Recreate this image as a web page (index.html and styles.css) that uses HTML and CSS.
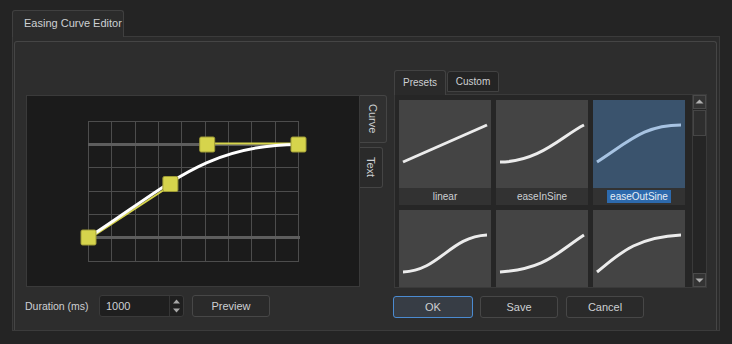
FILE: index.html
```html
<!DOCTYPE html>
<html>
<head>
<meta charset="utf-8">
<link rel="stylesheet" href="styles.css">
</head>
<body>
<div class="app">
  <div class="tabbar"><div class="tab">Easing Curve Editor</div></div>
  <div class="pane">
    <div class="frame">
      <div class="left">
        <div class="editor-row">
          <div class="canvas">
            <svg class="curve-svg" width="332" height="190" viewBox="0 0 332 190">
              <g stroke="#4d4d4d" stroke-width="1">
                <line x1="61.5" y1="25" x2="61.5" y2="166"/>
                <line x1="84.5" y1="25" x2="84.5" y2="166"/>
                <line x1="108.5" y1="25" x2="108.5" y2="166"/>
                <line x1="131.5" y1="25" x2="131.5" y2="166"/>
                <line x1="154.5" y1="25" x2="154.5" y2="166"/>
                <line x1="178.5" y1="25" x2="178.5" y2="166"/>
                <line x1="201.5" y1="25" x2="201.5" y2="166"/>
                <line x1="224.5" y1="25" x2="224.5" y2="166"/>
                <line x1="248.5" y1="25" x2="248.5" y2="166"/>
                <line x1="271.5" y1="25" x2="271.5" y2="166"/>
                <line x1="61" y1="25.5" x2="272" y2="25.5"/>
                <line x1="61" y1="71.5" x2="272" y2="71.5"/>
                <line x1="61" y1="95.5" x2="272" y2="95.5"/>
                <line x1="61" y1="118.5" x2="272" y2="118.5"/>
                <line x1="61" y1="165.5" x2="272" y2="165.5"/>
              </g>
              <g stroke="#5e5e5e" stroke-width="3">
                <line x1="61" y1="48.5" x2="273" y2="48.5"/>
                <line x1="61" y1="141.5" x2="273" y2="141.5"/>
              </g>
              <g stroke="#d6d44c" stroke-width="2">
                <line x1="62.5" y1="142.5" x2="144.4" y2="89"/>
                <line x1="180.2" y1="47.5" x2="271.5" y2="47.5"/>
              </g>
              <path d="M61.5 141.5 C143.4 88 180.2 48.5 271.5 48.5" fill="none" stroke="#ffffff" stroke-width="3"/>
              <g fill="#d6d44c" stroke="#9e9b36" stroke-width="1">
                <rect x="54" y="134" width="15" height="15" rx="1.5"/>
                <rect x="135.9" y="80.5" width="15" height="15" rx="1.5"/>
                <rect x="172.7" y="41" width="15" height="15" rx="1.5"/>
                <rect x="264" y="41" width="15" height="15" rx="1.5"/>
              </g>
            </svg>
          </div>
          <div class="vtabs">
            <div class="vtab vtab-active">Curve</div>
            <div class="vtab vtab-text">Text</div>
          </div>
        </div>
        <div class="bottom-row">
          <span class="dur-label">Duration (ms)</span>
          <div class="spin">
            <span class="spin-value">1000</span>
            <div class="spin-btns">
              <svg width="13" height="20" viewBox="0 0 13 20">
                <polygon points="3,7.5 10,7.5 6.5,3.5" fill="#a8a8a8"/>
                <polygon points="3,12.5 10,12.5 6.5,16.5" fill="#a8a8a8"/>
              </svg>
            </div>
          </div>
          <div class="btn btn-preview">Preview</div>
        </div>
      </div>
      <div class="right">
        <div class="ptabs">
          <div class="ptab ptab-active">Presets</div>
          <div class="ptab">Custom</div>
        </div>
        <div class="list">
          <div class="items">
            <div class="item">
              <svg class="thumb" width="92" height="88" viewBox="0 0 92 88"><path d="M4 62 L88 25" /></svg>
              <div class="item-label"><span>linear</span></div>
            </div>
            <div class="item">
              <svg class="thumb" width="92" height="88" viewBox="0 0 92 88"><path d="M4 62 C43.5 62 66.6 35.5 88 25" /></svg>
              <div class="item-label"><span>easeInSine</span></div>
            </div>
            <div class="item item-selected">
              <svg class="thumb" width="92" height="88" viewBox="0 0 92 88"><path d="M4 62 C36.8 40.7 51.5 25 88 25" /></svg>
              <div class="item-label"><span>easeOutSine</span></div>
            </div>
            <div class="item">
              <svg class="thumb" width="92" height="88" viewBox="0 0 92 88"><path d="M4 62 C41.4 60.2 50.2 26.9 88 25" /></svg>
            </div>
            <div class="item">
              <svg class="thumb" width="92" height="88" viewBox="0 0 92 88"><path d="M4 62 C50.2 58.9 61.1 42.4 88 25" /></svg>
            </div>
            <div class="item">
              <svg class="thumb" width="92" height="88" viewBox="0 0 92 88"><path d="M4 62 C25 45 41.8 27.2 88 25" /></svg>
            </div>
          </div>
          <div class="scrollbar">
            <div class="sb-btn">
              <svg width="11" height="12" viewBox="0 0 11 12"><polygon points="1.5,7.5 9.5,7.5 5.5,3.5" fill="#b0b0b0"/></svg>
            </div>
            <div class="sb-handle"></div>
            <div class="sb-track"></div>
            <div class="sb-btn">
              <svg width="11" height="12" viewBox="0 0 11 12"><polygon points="1.5,4.5 9.5,4.5 5.5,8.5" fill="#b0b0b0"/></svg>
            </div>
          </div>
        </div>
        <div class="bottom-row bottom-right">
          <div class="btn btn-ok">OK</div>
          <div class="btn btn-save">Save</div>
          <div class="btn btn-cancel">Cancel</div>
        </div>
      </div>
    </div>
  </div>
</div>
</body>
</html>
```

FILE: styles.css
```css
* { box-sizing: border-box; }
html, body {
  margin: 0;
  padding: 0;
  background: #242424;
}
body {
  font-family: "Liberation Sans", Arial, sans-serif;
  font-size: 10.5px;
  color: #cdd0d3;
  width: 732px;
  height: 344px;
  overflow: hidden;
}
.app {
  padding: 10px 12px 0 12px;
}
.tabbar {
  display: flex;
  height: 26px;
}
.tab {
  position: relative;
  z-index: 1;
  width: 112px;
  height: 27px;
  padding-left: 11px;
  line-height: 25px;
  font-size: 11px;
  background: #2b2b2b;
  border: 1px solid #404040;
  border-bottom: none;
  border-radius: 3px 3px 0 0;
}
.pane {
  width: 708px;
  height: 295px;
  border: 1px solid #3b3b3b;
  background: #2b2b2b;
  padding: 4px 2px 0 1px;
}
.frame {
  height: 100%;
  border: 1px solid #454545;
  border-bottom: none;
  border-radius: 3px 3px 0 0;
  background: #2d2d2d;
  padding: 28px 9px 0 11px;
  display: flex;
  gap: 7px;
}
.left {
  width: 361px;
  margin-top: 25px;
  display: flex;
  flex-direction: column;
}
.editor-row {
  display: flex;
  height: 192px;
}
.canvas {
  width: 334px;
  height: 192px;
  border: 1px solid #3a3a3a;
  background: #1b1b1b;
}
.curve-svg { display: block; }
.vtabs {
  width: 27px;
  display: flex;
  flex-direction: column;
  align-items: flex-start;
}
.vtab {
  writing-mode: vertical-rl;
  display: flex;
  align-items: center;
  justify-content: center;
  border: 1px solid #454545;
  border-left: none;
  border-radius: 0 3px 3px 0;
  font-size: 11px;
}
.vtab-active {
  width: 27px;
  height: 48px;
  background: #303030;
}
.vtab-text {
  width: 23px;
  height: 41px;
  margin-top: 4px;
  background: #2a2a2a;
}
.bottom-row {
  display: flex;
  align-items: center;
  height: 22px;
  margin-top: 8px;
}
.dur-label {
  width: 74px;
  margin-left: -1px;
}
.spin {
  width: 85px;
  height: 22px;
  border: 1px solid #3a3a3a;
  border-radius: 3px;
  background: #1f1f1f;
  display: flex;
  align-items: center;
  justify-content: space-between;
}
.spin-value {
  padding-left: 6px;
  font-size: 11px;
}
.spin-btns {
  width: 14px;
  height: 20px;
  border-left: 1px solid #353535;
}
.spin-btns svg { display: block; }
.btn {
  height: 22px;
  border: 1px solid #474747;
  border-radius: 3px;
  background: #2a2a2a;
  display: flex;
  align-items: center;
  justify-content: center;
  font-size: 11px;
}
.btn-preview {
  width: 78px;
  margin-left: 8px;
}
.right {
  width: 313px;
  display: flex;
  flex-direction: column;
}
.ptabs {
  display: flex;
  align-items: flex-end;
  height: 24px;
  gap: 1px;
}
.ptab {
  width: 52px;
  height: 21px;
  margin-bottom: 2px;
  border: 1px solid #424242;
  border-radius: 3px 3px 0 0;
  background: #242424;
  display: flex;
  align-items: center;
  justify-content: center;
  font-size: 10px;
}
.ptab-active {
  height: 25px;
  margin-bottom: -1px;
  background: #2a2a2a;
  position: relative;
  z-index: 1;
  border-bottom: none;
  padding-bottom: 2px;
}
.list {
  height: 194px;
  border: 1px solid #3a3a3a;
  background: #262626;
  display: flex;
  overflow: hidden;
}
.items {
  width: 297px;
  padding: 5px 0 0 4px;
  display: grid;
  grid-template-columns: 92px 92px 92px;
  grid-auto-rows: 105px;
  column-gap: 5px;
  row-gap: 5px;
  overflow: hidden;
}
.item {
  display: flex;
  flex-direction: column;
  background: #323232;
}
.thumb {
  display: block;
  background: #444444;
}
.thumb path {
  fill: none;
  stroke: #ececec;
  stroke-width: 3;
}
.item-label {
  height: 17px;
  display: flex;
  align-items: center;
  justify-content: center;
  font-size: 10px;
}
.item-label span {
  padding: 1px 3px;
}
.item-selected .thumb {
  background: #3a536d;
}
.item-selected .thumb path {
  stroke: #a7c3e2;
}
.item-selected .item-label span {
  background: #2d6aad;
  color: #e6eef6;
}
.scrollbar {
  width: 14px;
  margin-left: auto;
  display: flex;
  flex-direction: column;
  background: #252525;
  border-left: 1px solid #3a3a3a;
}
.sb-btn {
  height: 14px;
  background: #333333;
  border: 1px solid #4a4a4a;
  display: flex;
  align-items: center;
  justify-content: center;
}
.sb-btn svg { display: block; }
.sb-handle {
  height: 26px;
  margin-top: 1px;
  background: #2e2e2e;
  border: 1px solid #464646;
}
.sb-track {
  flex: 1;
}
.bottom-right {
  margin-left: -1px;
}
.btn-ok {
  width: 80px;
  background: #373d45;
  border-color: #4b8bd1;
}
.btn-save {
  width: 78px;
  margin-left: 7px;
}
.btn-cancel {
  width: 78px;
  margin-left: 8px;
}
```
